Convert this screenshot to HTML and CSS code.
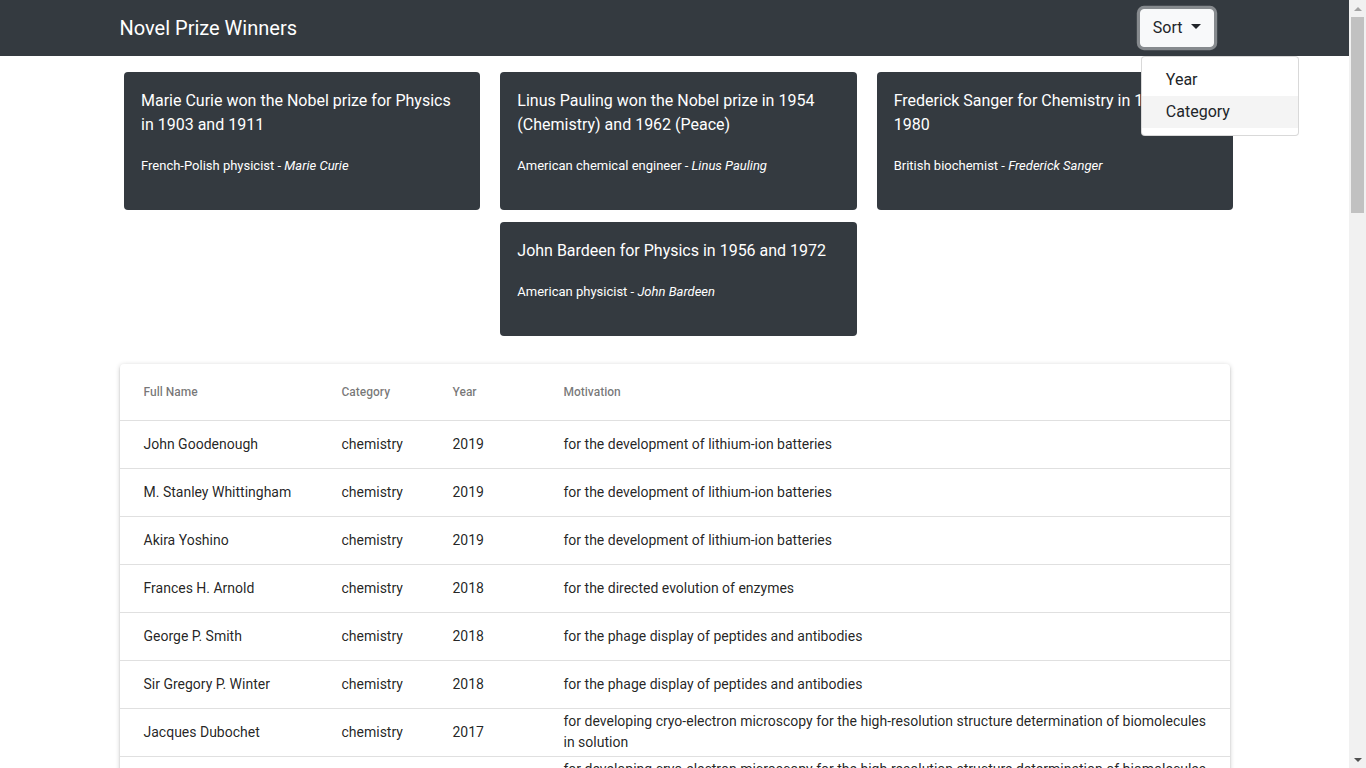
FILE: index.html
```html
<!DOCTYPE html>
<html lang="en">
<head>
<meta charset="utf-8">
<title>Novel Prize Winners</title>
<link rel="stylesheet" href="styles.css">
</head>
<body>
<div class="page">
<nav class="navbar">
  <div class="container nav-inner">
    <span class="brand">Novel Prize Winners</span>
    <div class="dropdown">
      <button class="sort-btn" type="button">Sort<span class="caret"></span></button>
      <div class="dropdown-menu">
        <div class="dropdown-item">Year</div>
        <div class="dropdown-item active">Category</div>
      </div>
    </div>
  </div>
</nav>
<main class="container">
  <section class="cards">
    <div class="card">
      <div class="card-title">Marie Curie won the Nobel prize for Physics in 1903 and 1911</div>
      <div class="card-sub">French-Polish physicist - <em>Marie Curie</em></div>
    </div>
    <div class="card">
      <div class="card-title">Linus Pauling won the Nobel prize in 1954 (Chemistry) and 1962 (Peace)</div>
      <div class="card-sub">American chemical engineer - <em>Linus Pauling</em></div>
    </div>
    <div class="card">
      <div class="card-title">Frederick Sanger for Chemistry in 1958 and 1980</div>
      <div class="card-sub">British biochemist - <em>Frederick Sanger</em></div>
    </div>
    <div class="card">
      <div class="card-title">John Bardeen for Physics in 1956 and 1972</div>
      <div class="card-sub">American physicist - <em>John Bardeen</em></div>
    </div>
  </section>
  <section class="paper">
    <table class="table">
      <colgroup>
        <col class="c-name"><col class="c-cat"><col class="c-year"><col>
      </colgroup>
      <thead>
        <tr><th>Full Name</th><th>Category</th><th>Year</th><th>Motivation</th></tr>
      </thead>
      <tbody>
        <tr><td>John Goodenough</td><td>chemistry</td><td>2019</td><td>for the development of lithium-ion batteries</td></tr>
        <tr><td>M. Stanley Whittingham</td><td>chemistry</td><td>2019</td><td>for the development of lithium-ion batteries</td></tr>
        <tr><td>Akira Yoshino</td><td>chemistry</td><td>2019</td><td>for the development of lithium-ion batteries</td></tr>
        <tr><td>Frances H. Arnold</td><td>chemistry</td><td>2018</td><td>for the directed evolution of enzymes</td></tr>
        <tr><td>George P. Smith</td><td>chemistry</td><td>2018</td><td>for the phage display of peptides and antibodies</td></tr>
        <tr><td>Sir Gregory P. Winter</td><td>chemistry</td><td>2018</td><td>for the phage display of peptides and antibodies</td></tr>
        <tr><td>Jacques Dubochet</td><td>chemistry</td><td>2017</td><td>for developing cryo-electron microscopy for the high-resolution structure determination of biomolecules in solution</td></tr>
        <tr><td>Joachim Frank</td><td>chemistry</td><td>2017</td><td>for developing cryo-electron microscopy for the high-resolution structure determination of biomolecules in solution</td></tr>
        <tr><td>Richard Henderson</td><td>chemistry</td><td>2017</td><td>for developing cryo-electron microscopy for the high-resolution structure determination of biomolecules in solution</td></tr>
        <tr><td>Jean-Pierre Sauvage</td><td>chemistry</td><td>2016</td><td>for the design and synthesis of molecular machines</td></tr>
        <tr><td>Sir J. Fraser Stoddart</td><td>chemistry</td><td>2016</td><td>for the design and synthesis of molecular machines</td></tr>
        <tr><td>Bernard L. Feringa</td><td>chemistry</td><td>2016</td><td>for the design and synthesis of molecular machines</td></tr>
      </tbody>
    </table>
  </section>
</main>
</div>
<div class="scrollbar" aria-hidden="true">
  <div class="sb-btn"><span class="sb-up"></span></div>
  <div class="sb-track"><div class="sb-thumb"></div></div>
  <div class="sb-btn"><span class="sb-down"></span></div>
</div>
</body>
</html>
```
FILE: styles.css
```css
* { box-sizing: border-box; }
html, body { margin: 0; padding: 0; }
body {
  font-family: Roboto, "Liberation Sans", Arial, sans-serif;
  font-size: 16px;
  line-height: 1.5;
  color: #212529;
  background: #fff;
}
.page {
  margin-right: 17px;
}
.container {
  width: 1110px;
  margin: 0 auto;
}
.navbar {
  background: #343a40;
  height: 56px;
}
.nav-inner {
  height: 56px;
  display: flex;
  align-items: center;
  justify-content: space-between;
}
.brand {
  color: #fff;
  font-size: 20px;
  line-height: 30px;
}
.dropdown {
  position: relative;
  margin-right: 16px;
}
.sort-btn {
  font-family: inherit;
  font-size: 16px;
  line-height: 24px;
  color: #212529;
  background: #f8f9fa;
  border: 1px solid #f8f9fa;
  border-radius: 4px;
  padding: 6px 12px;
  height: 38px;
  display: flex;
  align-items: center;
  box-shadow: 0 0 0 3.2px rgba(216, 217, 219, 0.5);
  cursor: pointer;
}
.caret {
  display: inline-block;
  width: 0;
  height: 0;
  margin-left: 8px;
  margin-top: -4px;
  border-top: 5px solid #212529;
  border-left: 5px solid transparent;
  border-right: 5px solid transparent;
}
.dropdown-menu {
  position: absolute;
  top: 47px;
  left: 1px;
  width: 158px;
  background: #fff;
  border: 1px solid rgba(0, 0, 0, 0.15);
  border-radius: 4px;
  padding: 7px 0;
  z-index: 10;
}
.dropdown-item {
  padding: 4px 24px 4px 24px;
  font-size: 16px;
  line-height: 24px;
  color: #212529;
}
.dropdown-item.active {
  background: #f4f4f4;
}
.cards {
  width: 1109px;
  margin: 16px 0 0 4.5px;
  display: flex;
  flex-wrap: wrap;
  justify-content: center;
  gap: 12px 20px;
}
.card {
  width: 356.33px;
  background: #343a40;
  border-radius: 4px;
  padding: 17px 17px 34px;
  color: #fff;
}
.card-title {
  font-size: 16px;
  line-height: 24px;
}
.card-sub {
  margin-top: 19px;
  font-size: 13px;
  line-height: 20px;
}
.card-sub em { font-style: italic; }
.paper {
  margin-top: 28px;
  background: #fff;
  border-radius: 4px;
  box-shadow: 0 1px 5px 0 rgba(0,0,0,0.2), 0 2px 2px 0 rgba(0,0,0,0.14), 0 3px 1px -2px rgba(0,0,0,0.12);
}
.table {
  width: 100%;
  border-collapse: collapse;
  table-layout: fixed;
}
.c-name { width: 198px; }
.c-cat { width: 111px; }
.c-year { width: 111px; }
.table th {
  height: 56px;
  text-align: left;
  font-size: 12px;
  font-weight: 500;
  color: rgba(0, 0, 0, 0.54);
  padding: 0 16px 0 24px;
  border-bottom: 1px solid #e0e0e0;
}
.table td {
  height: 48px;
  font-size: 14px;
  line-height: 21px;
  color: rgba(0, 0, 0, 0.87);
  padding: 2px 16px 2px 24px;
  border-bottom: 1px solid #e0e0e0;
  vertical-align: middle;
}
.table th:last-child, .table td:last-child { padding-right: 18px; }

/* emulated browser scrollbar */
.scrollbar {
  position: fixed;
  top: 0;
  right: 0;
  width: 17px;
  height: 100vh;
  background: #f1f1f1;
  display: flex;
  flex-direction: column;
  z-index: 20;
}
.sb-btn {
  height: 17px;
  flex: none;
  display: flex;
  align-items: center;
  justify-content: center;
}
.sb-track {
  flex: 1;
}
.sb-thumb {
  margin-left: 2px;
  width: 13px;
  height: 196px;
  background: #c1c1c1;
}
.sb-up {
  width: 0;
  height: 0;
  border-left: 4px solid transparent;
  border-right: 4px solid transparent;
  border-bottom: 4px solid #a3a3a3;
}
.sb-down {
  width: 0;
  height: 0;
  border-left: 4px solid transparent;
  border-right: 4px solid transparent;
  border-top: 4px solid #505050;
}
```
